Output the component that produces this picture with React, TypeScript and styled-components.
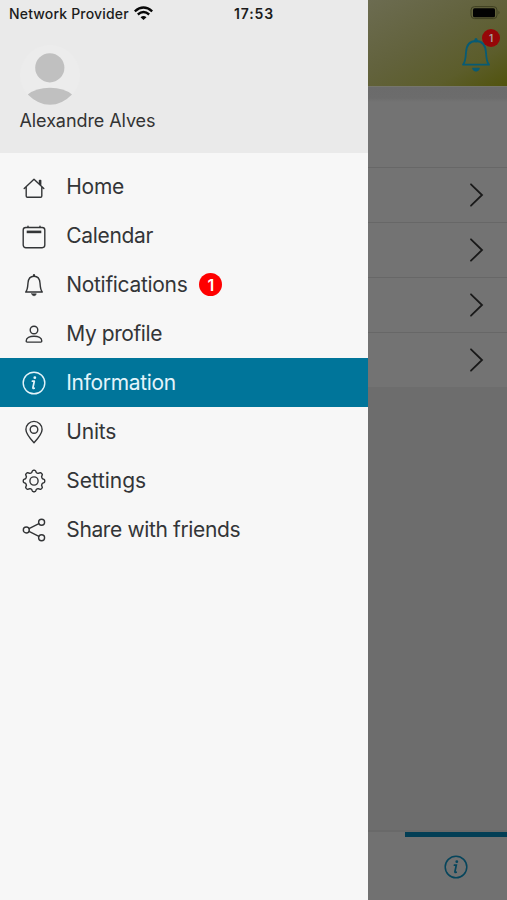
import React from "react";
import styled, { createGlobalStyle } from "styled-components";

const GlobalStyle = createGlobalStyle`
  * { box-sizing: border-box; }
  body { margin: 0; font-family: Inter, "Liberation Sans", sans-serif; }
`;

const Screen = styled.div`
  display: flex;
  width: 507px;
  height: 900px;
  overflow: hidden;
  background: #6d6d6d;
`;

const Drawer = styled.aside`
  display: flex;
  flex-direction: column;
  width: 368px;
  background: #f7f7f7;
`;

const DrawerHeader = styled.header`
  height: 153px;
  background: #eaeaea;
`;

const StatusBar = styled.div`
  display: flex;
  align-items: center;
  height: 26px;
  padding-left: 9px;
  color: #1c1c1c;
`;

const Carrier = styled.span`
  width: 125px;
  font-size: 14px;
  font-weight: 450;
  letter-spacing: 0.17px;
  line-height: 18px;
  padding-top: 1px;
  white-space: nowrap;
`;

const Clock = styled.span`
  margin-left: 81px;
  font-size: 14px;
  font-weight: 600;
  letter-spacing: 0.85px;
  line-height: 18px;
  padding-top: 1px;
`;

const Avatar = styled.svg`
  display: block;
  width: 60px;
  height: 60px;
  margin: 19px 0 0 20px;
`;

const UserName = styled.div`
  margin: 4px 0 0 19.5px;
  font-size: 18px;
  line-height: 24px;
  letter-spacing: -0.08px;
  color: #333;
`;

const Menu = styled.nav`
  display: flex;
  flex-direction: column;
  padding-top: 9.2px;
`;

const MenuItem = styled.a<{ $active?: boolean }>`
  display: flex;
  align-items: center;
  height: 48.88px;
  padding-left: 22px;
  color: ${(p) => (p.$active ? "#e4f4fa" : "#333537")};
  background: ${(p) => (p.$active ? "#00759a" : "transparent")};
`;

const MenuIcon = styled.svg`
  flex: none;
  width: 24px;
  height: 24px;
  margin: 2px 20.3px 0 0;
  fill: none;
  stroke: currentColor;
  stroke-width: 1.4;
  stroke-linecap: round;
  stroke-linejoin: round;
`;

const MenuLabel = styled.span<{ $spacing: number }>`
  font-size: 21px;
  line-height: 28px;
  padding-top: 1.6px;
  letter-spacing: ${(p) => p.$spacing}px;
  white-space: nowrap;
`;

const Badge = styled.span`
  display: grid;
  place-items: center;
  width: 23px;
  height: 23px;
  margin: 1px 0 0 12px;
  border-radius: 50%;
  background: #fe0000;
  color: #fff;
  font-size: 16px;
  font-weight: 600;
`;

const Page = styled.main`
  display: flex;
  flex-direction: column;
  flex: 1;
  min-width: 0;
`;

const Banner = styled.div`
  height: 86px;
  padding: 6px 9px 0 0;
  display: flex;
  flex-direction: column;
  align-items: flex-end;
  background: linear-gradient(150deg, #6c6c51 0%, #62623c 45%, #5c5d2b 75%, #51530d 100%);
`;

const Battery = styled.svg`
  display: block;
  width: 32px;
  height: 14px;
  margin-right: -4px;
`;

const Alerts = styled.div`
  position: relative;
  width: 36px;
  height: 44px;
  margin-top: 10.5px;
`;

const AlertBell = styled.svg`
  display: block;
  width: 30px;
  height: 40px;
  margin: 3px 0 0 -1px;
  fill: none;
  stroke: #075b75;
  stroke-width: 1.8;
  stroke-linejoin: round;
`;

const AlertCount = styled.span`
  position: absolute;
  top: -2px;
  right: -2px;
  display: grid;
  place-items: center;
  width: 18px;
  height: 18px;
  border-radius: 50%;
  background: #960708;
  color: #aaa0a0;
  font-size: 10px;
  font-weight: 600;
`;

const BlankCard = styled.div`
  height: 81px;
  border-top: 1px solid #76766c;
  background: linear-gradient(#6b6b6b 0, #6c6c6c 11px, #737373 15px);
`;

const ListRow = styled.div`
  display: flex;
  align-items: center;
  justify-content: flex-end;
  height: 55.1px;
  padding-right: 23px;
  border-top: 1.5px solid #676767;
  background: #737373;
`;

const Chevron = styled.svg`
  width: 16px;
  height: 26px;
  fill: none;
  stroke: #191919;
  stroke-width: 1.8;
  stroke-linecap: round;
`;

const Spacer = styled.div`
  flex: 1;
  border-bottom: 3px solid #696969;
`;

const TabBar = styled.div`
  display: flex;
  justify-content: flex-end;
  height: 68px;
  margin-top: -1px;
  background: #717171;
`;

const ActiveTab = styled.div`
  display: flex;
  justify-content: center;
  width: 102px;
  padding: 17.5px 1px 0 0;
  border-top: 5px solid #023e55;
  color: #06455c;
`;

const TabIcon = styled.svg`
  width: 24px;
  height: 24px;
  fill: none;
  stroke: currentColor;
  stroke-width: 1.5;
  stroke-linecap: round;
`;

const InfoMark = () => (
  <>
    <circle cx="12" cy="12" r="10.8" />
    <path d="M10.4 10.2h1.9l-1.4 6.6q-.2 1 1.3.4" strokeWidth="1.7" />
    <circle cx="12.8" cy="6.7" r="1.4" fill="currentColor" stroke="none" />
  </>
);

const teeth = 8;
const gearPath =
  Array.from({ length: 96 }, (_, i) => {
    const a = (i / 96) * Math.PI * 2;
    const r = 9.65 + 1.1 * Math.tanh(2.2 * Math.cos(a * teeth));
    return `${i ? "L" : "M"}${(12 + r * Math.cos(a)).toFixed(2)} ${(12 + r * Math.sin(a)).toFixed(2)}`;
  }).join("") + "Z";

interface Entry {
  label: string;
  spacing: number;
  icon: React.ReactNode;
  active?: boolean;
  count?: number;
}

const entries: Entry[] = [
  {
    label: "Home",
    spacing: -0.3,
    icon: (
      <>
        <path d="M2.2 12.4 12 3.2 21.8 12.4M4.2 10.8V20q0 1.2 1.2 1.2h13.2q1.2 0 1.2-1.2V10.8" />
        <path d="M17.6 7.4V4.6h1v4" strokeWidth="1.6" />
      </>
    ),
  },
  {
    label: "Calendar",
    spacing: -0.33,
    icon: (
      <>
        <rect x="1.2" y="2.5" width="21.6" height="20.2" rx="2.6" />
        <path d="M6 1.2v1M18 1.2v1" />
        <path d="M4.7 6.9h14.6" strokeWidth="2.6" strokeLinecap="butt" />
      </>
    ),
  },
  {
    label: "Notifications",
    spacing: -0.32,
    count: 1,
    icon: (
      <>
        <path d="M3.7 19h16.6c-1.8-1.5-2-4.7-2.3-9C17.7 5.5 15.7 3.2 12 3.2S6.3 5.5 6 10c-.3 4.3-.5 7.5-2.3 9Z" />
        <path d="M12 3V2" strokeWidth="2.2" />
        <path d="M9.7 20.8h4.6q-.5 2-2.3 2t-2.3-2Z" fill="currentColor" strokeWidth=".6" />
      </>
    ),
  },
  {
    label: "My profile",
    spacing: -0.43,
    icon: (
      <>
        <circle cx="12" cy="8" r="3.8" />
        <path d="M4.2 19.1c0-3.2 3.600-4.900 7.800-4.900s7.800 1.700 7.800 4.900q0 1-1 1H5.200q-1 0-1-1Z" />
      </>
    ),
  },
  { label: "Information", spacing: -0.32, active: true, icon: <InfoMark /> },
  {
    label: "Units",
    spacing: -0.2,
    icon: (
      <>
        <path d="M12 22.8C8.8 19.3 3.9 13.5 3.9 9.5a8.1 8.1 0 0 1 16.2 0c0 4-4.9 9.8-8.1 13.3Z" />
        <circle cx="12" cy="9.5" r="3.8" />
      </>
    ),
  },
  {
    label: "Settings",
    spacing: -0.1,
    icon: (
      <>
        <path d={gearPath} />
        <circle cx="12" cy="12" r="4.1" />
      </>
    ),
  },
  {
    label: "Share with friends",
    spacing: -0.37,
    icon: (
      <>
        <circle cx="4.3" cy="12" r="3" />
        <circle cx="19.6" cy="4.2" r="3" />
        <circle cx="19.6" cy="19.8" r="3" />
        <path d="m7 10.6 9.9-5M7 13.4l9.9 5" />
      </>
    ),
  },
];

export default function App() {
  return (
    <>
      <GlobalStyle />
      <Screen>
        <Drawer>
          <DrawerHeader>
            <StatusBar>
              <Carrier>Network Provider</Carrier>
              <svg width="19" height="15" viewBox="0 0 19 15" fill="none" stroke="#080808" strokeWidth="2.4">
                <path d="M.8 5.3Q9.5-2.2 18.2 5.3M3.8 8.500q5.700-4.800 11.400 0" />
                <path d="M9.5 14 6.500 11.200q3-2.500 6 0Z" fill="#080808" stroke="none" />
              </svg>
              <Clock>17:53</Clock>
            </StatusBar>
            <Avatar viewBox="0 0 60 60">
              <circle cx="30" cy="30" r="30" fill="#ececec" />
              <circle cx="29.8" cy="22.8" r="14.6" fill="#c0c0c0" />
              <path d="M7.8 49.500Q16 42.700 30 42.700T52 49.500Q42 59.800 30 59.800T7.800 49.500Z" fill="#c0c0c0" />
            </Avatar>
            <UserName>Alexandre Alves</UserName>
          </DrawerHeader>
          <Menu>
            {entries.map((e) => (
              <MenuItem key={e.label} $active={e.active}>
                <MenuIcon viewBox="0 0 24 24">{e.icon}</MenuIcon>
                <MenuLabel $spacing={e.spacing}>{e.label}</MenuLabel>
                {e.count && <Badge>{e.count}</Badge>}
              </MenuItem>
            ))}
          </Menu>
        </Drawer>
        <Page>
          <Banner>
            <Battery viewBox="0 0 32 14">
              <rect x="1" y=".6" width="26" height="12" rx="3.5" fill="none" stroke="#3f4022" />
              <rect x="3" y="2.2" width="22" height="9" rx="1.5" fill="#030303" />
              <path d="M28.5 4.8q2 1.7 0 3.6Z" fill="#3f4022" />
            </Battery>
            <Alerts>
              <AlertBell viewBox="0 0 30 40">
                <path d="M2 30.7h26c-2.5-2.5-2.7-6.5-3-12.2C24.6 11.5 21.7 7 15 7S5.4 11.5 5 18.500c-.3 5.700-.5 9.700-3 12.200Z" />
                <path d="M15 7V5.5" strokeWidth="3" strokeLinecap="round" />
                <path d="M11.5 34.2h7q-.7 3-3.5 3t-3.5-3Z" fill="#075b75" strokeWidth=".8" />
              </AlertBell>
              <AlertCount>1</AlertCount>
            </Alerts>
          </Banner>
          <BlankCard />
          {[0, 1, 2, 3].map((i) => (
            <ListRow key={i}>
              <Chevron viewBox="0 0 16 26">
                <path d="m3 2.3 11 10.700L3 23.700" />
              </Chevron>
            </ListRow>
          ))}
          <Spacer />
          <TabBar>
            <ActiveTab>
              <TabIcon viewBox="0 0 24 24">
                <InfoMark />
              </TabIcon>
            </ActiveTab>
          </TabBar>
        </Page>
      </Screen>
    </>
  );
}
